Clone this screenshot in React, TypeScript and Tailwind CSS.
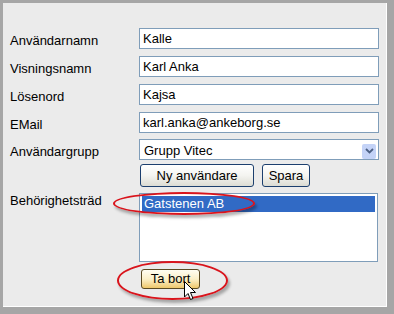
import React from "react"

const font = { fontFamily: '"Liberation Sans", Arial, sans-serif' }

const rows = [
  { label: "Användarnamn", value: "Kalle" },
  { label: "Visningsnamn", value: "Karl Anka" },
  { label: "Lösenord", value: "Kajsa" },
  { label: "EMail", value: "karl.anka@ankeborg.se" },
]

function XpButton({ children, className = "" }: { children: React.ReactNode; className?: string }) {
  return (
    <div
      className={`flex items-center justify-center rounded-[3px] border border-[#1c3f6e] bg-gradient-to-b from-white via-[#f4f4f0] to-[#dcdcd4] text-[13px] text-black ${className}`}
    >
      {children}
    </div>
  )
}

export default function App() {
  return (
    <div className="relative h-[314px] w-[394px] bg-[#a6a6a6] pb-[7px] pl-[3px] pr-[7px] pt-[3px]" style={font}>
      <div className="h-full border-b border-r border-white bg-[#ebebeb] pl-[7px] pt-[25px] text-[13px] text-black">
        {rows.map((r) => (
          <div key={r.label} className="mb-[7px] flex h-[21px] items-center">
            <div className="w-[129px] pt-[4px]">{r.label}</div>
            <div className="flex h-[21px] w-[240px] items-center border border-[#7f9db9] bg-white px-[3px]">{r.value}</div>
          </div>
        ))}

        {/* Group select */}
        <div className="mt-[-1px] flex h-[21px] items-center">
          <div className="w-[129px] pt-[4px]">Användargrupp</div>
          <div className="flex h-[21px] w-[240px] items-center justify-between border border-[#7f9db9] bg-white pl-[4px] pr-[2px]">
            <span className="pt-[2px]">Grupp Vitec</span>
            <div className="mt-[3px] flex h-[15px] w-[14px] items-center justify-center rounded-[2px] bg-[#c4d3f7]">
              <svg width="9" height="6" viewBox="0 0 9 6">
                <path d="M1 1 L4.5 4.5 L8 1" fill="none" stroke="#4d6185" strokeWidth="1.8" />
              </svg>
            </div>
          </div>
        </div>

        <div className="mt-[4px] flex gap-[8px] pl-[130px]">
          <XpButton className="h-[23px] w-[114px]">Ny användare</XpButton>
          <XpButton className="h-[23px] w-[48px]">Spara</XpButton>
        </div>

        {/* Permission tree */}
        <div className="mt-[6px] flex items-start">
          <div className="w-[129px] leading-[16px]">Behörighetsträd</div>
          <div className="h-[69px] w-[239px] border border-[#7f9db9] bg-white p-[2px]">
            <div className="flex h-[16px] items-center bg-[#316ac5] pl-[2px] text-white">Gatstenen AB</div>
          </div>
        </div>

        <div className="mt-[7px] pl-[131px]">
          <div className="flex h-[20px] w-[59px] items-center justify-center rounded-[3px] border border-[#5a4a22] bg-gradient-to-b from-[#fffdf2] via-[#fbf0c8] to-[#eec86a] text-[13px]">
            Ta bort
          </div>
        </div>
      </div>

      {/* Red annotations */}
      <div className="absolute left-[113px] top-[192px] h-[23px] w-[142px] rounded-[50%] border-2 border-[#d9141c] shadow-[2px_3px_3px_rgba(0,0,0,0.3)]" />
      <div className="absolute left-[117px] top-[261px] h-[39px] w-[111px] rounded-[50%] border-2 border-[#d9141c] shadow-[2px_3px_3px_rgba(0,0,0,0.3)]" />

      {/* Mouse pointer */}
      <svg className="absolute left-[184px] top-[281px]" width="13" height="20" viewBox="0 0 13 20">
        <path
          d="M0.5 0.5 L0.5 16 L4 12.5 L6.5 18.5 L9 17.5 L6.5 11.5 L11.5 11.5 Z"
          fill="white"
          stroke="black"
          strokeWidth="1"
        />
      </svg>
    </div>
  )
}
